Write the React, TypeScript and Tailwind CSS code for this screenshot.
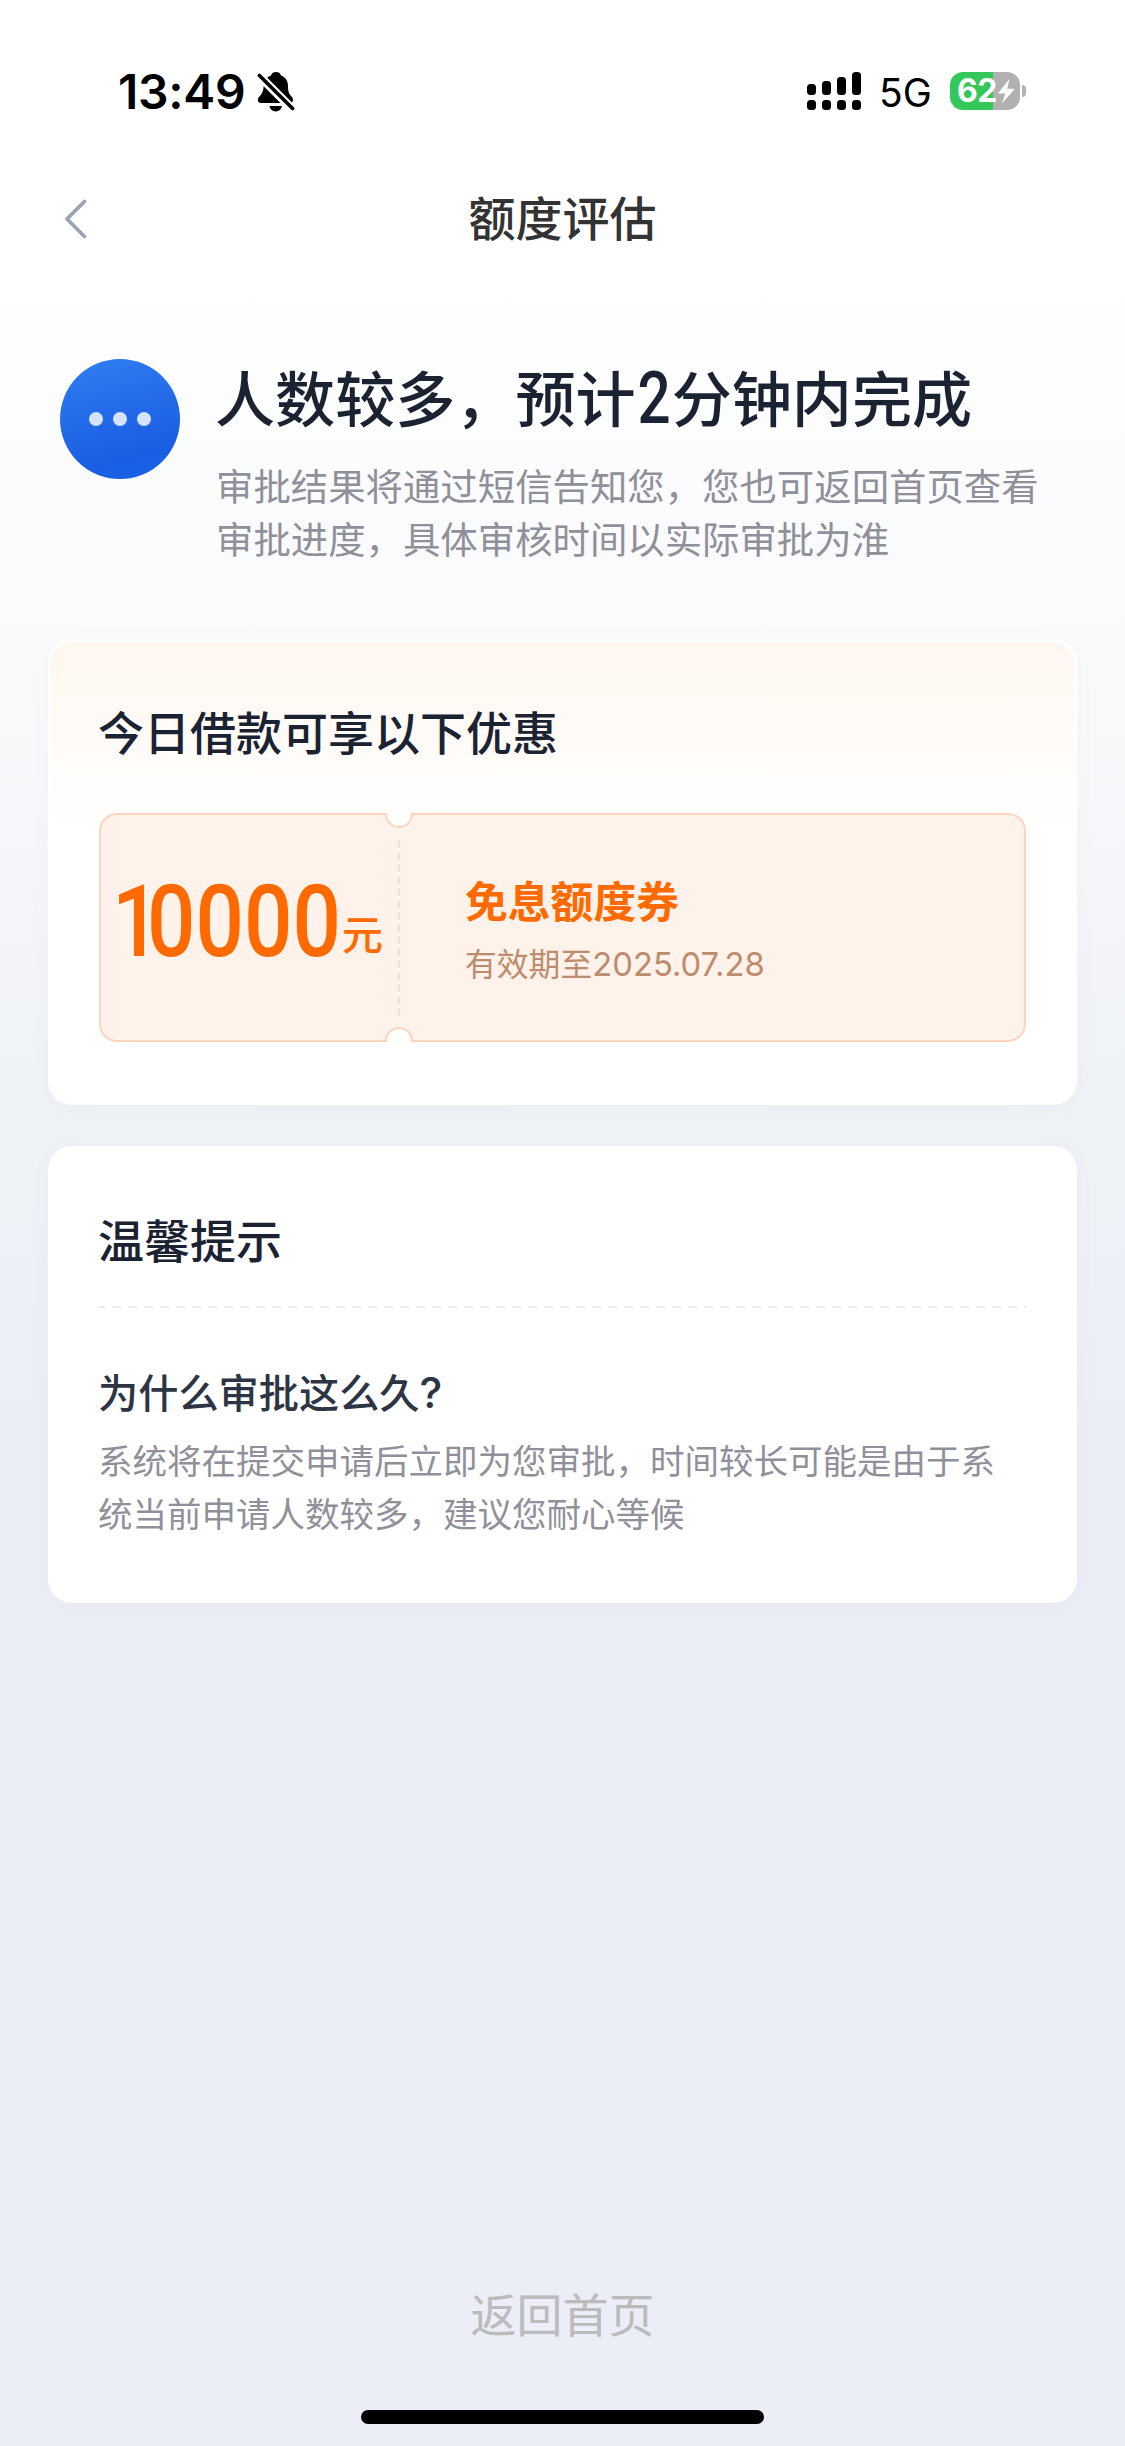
import type { ReactNode } from "react";

const SIGNAL = ["h-[11px]", "h-[14px]", "h-[18px]", "h-[23px]"];

function BellOffIcon() {
  return (
    <svg width="38" height="40" viewBox="0 0 38 40" aria-hidden="true">
      <path
        d="M19 0C22 0 23.6 1.8 24 3.6C29 5.4 31 9.6 31 14C31 20 32 22 35 25C36.6 27 36.4 31 33 31H4C.4 31 .2 27 2 25C5.4 21.6 6.4 19 6.6 14C7 9 9.5 5.2 14 3.6C14.4 1.8 16 0 19 0Z"
        fill="#000"
      />
      <path d="M12.5 34H25C24.4 37.4 22 39.4 18.8 39.4S13 37.4 12.5 34Z" fill="#000" />
      <path d="M2 3.6L36 37.6" stroke="#fff" strokeWidth="8.5" />
      <path d="M2.4 3.4L35.6 36.6" stroke="#000" strokeWidth="3.6" strokeLinecap="round" />
    </svg>
  );
}

function StatusBar() {
  return (
    <div className="flex h-[140px] items-start justify-between pt-[72px] pl-[118px] pr-[99px] font-['Inter',sans-serif]">
      <div className="flex h-10 items-center">
        <span className="w-[139px] text-[48px] leading-10 font-semibold tracking-[-0.3px] text-black">13:49</span>
        <BellOffIcon />
      </div>
      <div className="flex h-[38px] items-center">
        <div className="flex h-[38px] items-end gap-[5.5px]">
          {SIGNAL.map((height) => (
            <div key={height} className="flex flex-col gap-[5px]">
              <span className={`w-[9.5px] rounded-[3.5px] bg-black ${height}`} />
              <span className="h-[10px] w-[9.5px] rounded-[3.5px] bg-black" />
            </div>
          ))}
        </div>
        <span className="ml-[18px] w-[71px] pt-[3px] text-[39px] leading-[38px] text-black">5G</span>
        <div className="flex h-[38px] w-[70px] items-center rounded-[13px] bg-[linear-gradient(to_right,#34c759_62%,#b1b1b1_62%)] pl-[7px]">
          <span className="w-[41px] text-[32px] leading-[38px] font-bold tracking-[-0.5px] text-white">62</span>
          <svg width="17" height="25" viewBox="0 0 17 25" aria-hidden="true">
            <path d="M11.5 0L.6 13.4C.2 14 .5 14.5 1.2 14.5H7.2L4 24.5L16 10.8C16.4 10.3 16 9.8 15.4 9.8H9.2Z" fill="#fff" />
          </svg>
        </div>
        <span className="ml-[2px] h-3 w-[4px] rounded-r-full bg-[#b1b1b1]" />
      </div>
    </div>
  );
}

function NavBar() {
  return (
    <div className="grid h-[158px] grid-cols-[1fr_auto_1fr] items-center px-[62px]">
      <button type="button" aria-label="返回" className="justify-self-start">
        <svg width="26" height="42" viewBox="0 0 26 42" fill="none">
          <path d="M22.5 3.5L5 21L22.5 38.5" stroke="#9aa3b5" strokeWidth="3.8" strokeLinecap="round" strokeLinejoin="round" />
        </svg>
      </button>
      <h1 className="pb-[6px] text-[47px] leading-[60px] font-medium text-[#333]">额度评估</h1>
    </div>
  );
}

function Card({ className, children }: { className: string; children: ReactNode }) {
  return (
    <section className={`rounded-[24px] bg-white shadow-[0_4px_20px_rgba(120,140,180,0.04)] ${className}`}>
      {children}
    </section>
  );
}

function Coupon() {
  return (
    <div className="relative mt-[51px] flex h-[229px] w-[927px]">
      <svg className="absolute inset-0" width="927" height="229" viewBox="0 0 927 229" aria-hidden="true">
        <path
          d="M18 1H287A13 13 0 0 0 313 1H909A17 17 0 0 1 926 18V211A17 17 0 0 1 909 228H313A13 13 0 0 0 287 228H18A17 17 0 0 1 1 211V18A17 17 0 0 1 18 1Z"
          fill="#fff2ea"
          stroke="#fdd5bd"
          strokeWidth="2"
        />
        <path d="M300 28V204" stroke="#fddcc8" strokeWidth="2" strokeDasharray="7 5" />
      </svg>
      <div className="relative flex w-[300px] items-baseline pt-[50px] pl-[13px] text-[#ff6a00]">
        <span className="w-[230px]">
          <span className="inline-block w-[270px] origin-left scale-x-[0.845] font-['Roboto',sans-serif] text-[101px] leading-[118px] font-medium whitespace-nowrap">
            <span className="tracking-[-16px]">1</span>0000
          </span>
        </span>
        <span className="relative -top-[6px] text-[41px] leading-none font-medium">元</span>
      </div>
      <div className="relative flex flex-col pt-[58px] pl-[66px]">
        <span className="text-[42.8px] leading-[56px] font-bold text-[#ff6a00]">免息额度券</span>
        <span className="mt-[13px] text-[31.8px] leading-[44px] text-[#bd8c6e]">
          有效期至<span className="font-['Inter',sans-serif] text-[32.8px]">2025.07.28</span>
        </span>
      </div>
    </div>
  );
}

export default function App() {
  return (
    <main className="flex h-[2446px] w-[1125px] flex-col overflow-hidden bg-[linear-gradient(to_bottom,#fff_0px,#fff_270px,#f9fafc_640px,#eff2f6_1110px,#ebeef6_1430px)] font-['Noto_Sans_CJK_SC',sans-serif]">
      <StatusBar />
      <NavBar />

      <div className="flex h-[341px] items-start gap-[36px] pt-[61px] pl-[60px]">
        <div className="flex size-[120px] shrink-0 items-center justify-center gap-[10px] rounded-full bg-[linear-gradient(165deg,#2f7cf2_5%,#1a5ee2_75%,#1a63e8)]">
          <span className="size-[14px] rounded-full bg-[#d5e2fb]" />
          <span className="size-[14px] rounded-full bg-[#d5e2fb]" />
          <span className="size-[14px] rounded-full bg-[#d5e2fb]" />
        </div>
        <div className="-mt-[3px]">
          <h2 className="-ml-px flex text-[60.1px] leading-[80px] font-medium whitespace-nowrap text-[#1b2333]">
            人数较多，预计
            <span className="inline-block w-[36px] origin-left scale-x-[0.8] pt-[2px] pl-[2px] font-['Roboto',sans-serif] text-[73px]">
              2
            </span>
            分钟内完成
          </h2>
          <p className="mt-[21px] text-[37.4px] leading-[53.3px] whitespace-nowrap text-[#8f9099]">
            审批结果将通过短信告知您，您也可返回首页查看
            <br />
            审批进度，具体审核时间以实际审批为淮
          </p>
        </div>
      </div>

      <div className="flex flex-col gap-[41px] px-12">
        <Card className="h-[466px] border-[3px] border-white bg-[linear-gradient(to_bottom,#fff7f0,#fff_190px)] px-[48px] pt-[56px]">
          <h3 className="-ml-px text-[46px] leading-[64px] font-medium text-[#1b2333]">今日借款可享以下优惠</h3>
          <Coupon />
        </Card>

        <Card className="h-[457px] px-[51px] pt-[60px]">
          <h3 className="-ml-px text-[46px] leading-[64px] font-medium text-[#1b2333]">温馨提示</h3>
          <svg className="mt-[36px] block" width="927" height="2" viewBox="0 0 927 2" aria-hidden="true">
            <path d="M0 1H927" stroke="#ececec" strokeWidth="2" strokeDasharray="9 7" strokeDashoffset="3" />
          </svg>
          <h4 className="mt-[55px] -ml-px text-[40.2px] leading-[56px] font-medium text-[#2d3444]">
            为什么审批这么久<span className="font-['Inter',sans-serif] text-[43px]">?</span>
          </h4>
          <p className="mt-[13px] -ml-px text-[34.5px] leading-[53.3px] whitespace-nowrap text-[#8f9099]">
            系统将在提交申请后立即为您审批，时间较长可能是由于系
            <br />
            统当前申请人数较多，建议您耐心等候
          </p>
        </Card>
      </div>

      <div className="mt-auto flex flex-col items-center pb-[22px]">
        <button type="button" className="text-[46px] leading-[64px] text-[#bbb]">
          返回首页
        </button>
        <span className="mt-[66px] h-[14px] w-[403px] rounded-full bg-black" />
      </div>
    </main>
  );
}
